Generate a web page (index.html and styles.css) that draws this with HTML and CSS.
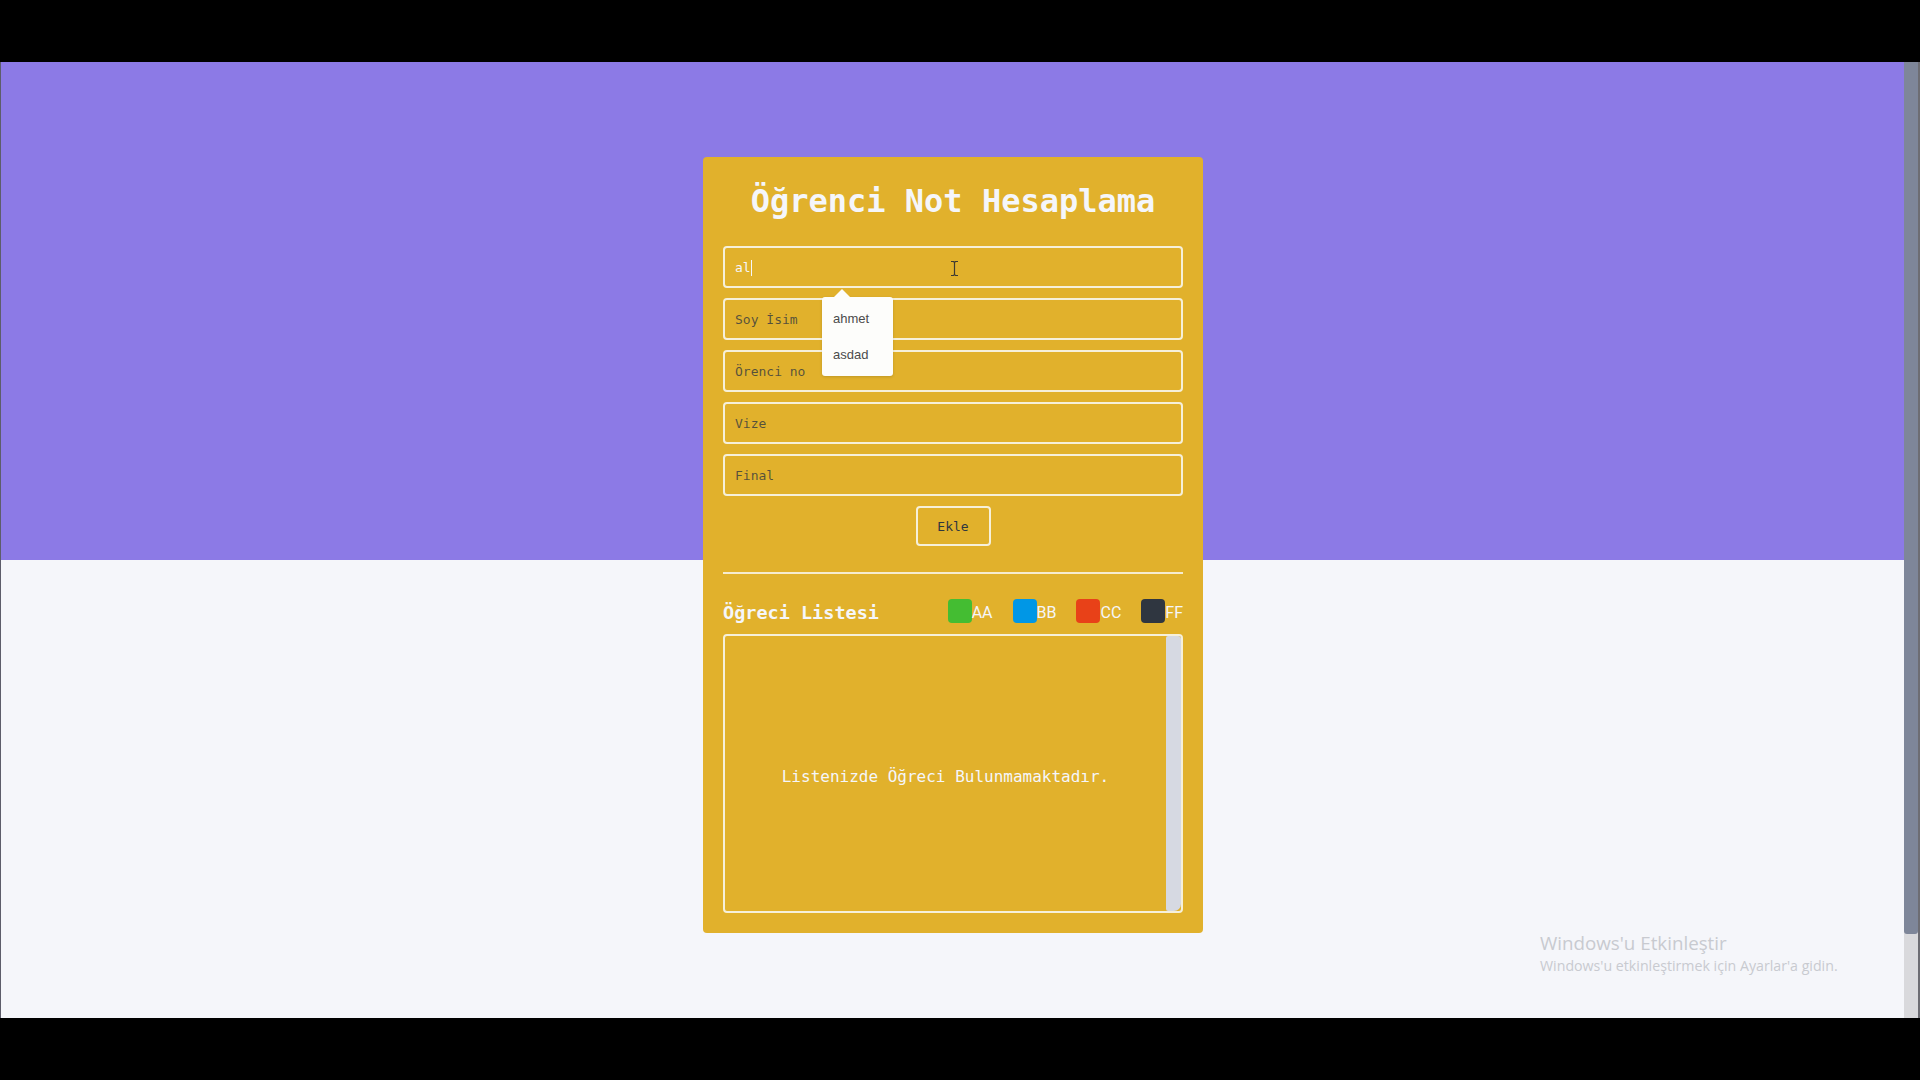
FILE: index.html
```html
<!DOCTYPE html>
<html lang="tr">
<head>
<meta charset="utf-8">
<title>Öğrenci Not Hesaplama</title>
<link rel="stylesheet" href="styles.css">
</head>
<body>
<div class="frame">
  <div class="viewport">
    <div class="card">
      <h1 class="title">Öğrenci Not Hesaplama</h1>
      <div class="fields">
        <div class="field-wrap">
          <input class="field field-active" type="text" value="al">
          <span class="caret"></span>
          <svg class="ibeam" width="9" height="17" viewBox="0 0 9 17"><path d="M1 1.5h2.5L4.5 2.5L5.5 1.5H8M4.5 2.5V14.5M1 15.5h2.5L4.5 14.5L5.5 15.5H8" fill="none" stroke="#3d3a33" stroke-width="1.2"/></svg>
        </div>
        <input class="field" type="text" placeholder="Soy İsim">
        <input class="field" type="text" placeholder="Örenci no">
        <input class="field" type="text" placeholder="Vize">
        <input class="field" type="text" placeholder="Final">
      </div>
      <div class="actions"><button class="btn">Ekle</button></div>
      <div class="divider"></div>
      <div class="list-head">
        <h2 class="list-title">Öğreci Listesi</h2>
        <div class="legend">
          <div class="legend-item"><span class="sw sw-aa"></span><span class="lg">AA</span></div>
          <div class="legend-item"><span class="sw sw-bb"></span><span class="lg">BB</span></div>
          <div class="legend-item"><span class="sw sw-cc"></span><span class="lg">CC</span></div>
          <div class="legend-item"><span class="sw sw-ff"></span><span class="lg">FF</span></div>
        </div>
      </div>
      <div class="list-box">
        <div class="list-content"><p class="empty">Listenizde Öğreci Bulunmamaktadır.</p></div>
        <div class="list-bar"></div>
      </div>
      <div class="autocomplete">
        <span class="ac-arrow"></span>
        <div class="ac-item">ahmet</div>
        <div class="ac-item">asdad</div>
      </div>
    </div>
    <div class="watermark">
      <div class="wm-1">Windows'u Etkinleştir</div>
      <div class="wm-2">Windows'u etkinleştirmek için Ayarlar'a gidin.</div>
    </div>
  </div>
  <div class="page-bar"><div class="page-thumb"></div></div>
</div>
</body>
</html>
```
FILE: styles.css
```css
html, body {
  margin: 0;
  padding: 0;
  background: #000;
  width: 1920px;
  height: 1080px;
  overflow: hidden;
}
.frame {
  margin-top: 62px;
  height: 956px;
  display: flex;
}
.viewport {
  flex: 1;
  position: relative;
  background: linear-gradient(#8c7ae6 0, #8c7ae6 498px, #f5f6fa 498px, #f5f6fa 100%);
  border-left: 1px solid #5d5d6a;
  padding-top: 95px;
  box-sizing: border-box;
}
.card {
  position: relative;
  width: 500px;
  margin: 0 auto;
  left: 0.5px;
  box-sizing: border-box;
  padding: 20px;
  background: #e1b12c;
  border-radius: 4px;
  font-family: "DejaVu Sans Mono", monospace;
}
.title {
  margin: 0 0 21px;
  font-size: 32px;
  line-height: 48px;
  font-weight: bold;
  text-align: center;
  color: #f5f6fa;
}
.fields {
  display: flex;
  flex-direction: column;
  gap: 10px;
}
.field-wrap {
  position: relative;
}
.field {
  display: block;
  width: 100%;
  height: 42px;
  box-sizing: border-box;
  padding: 0 10px;
  border: 2px solid #f6f0da;
  border-radius: 4px;
  background: transparent;
  font-family: "DejaVu Sans Mono", monospace;
  font-size: 13px;
  color: #f5f6fa;
  outline: none;
}
.field::placeholder {
  color: rgba(47, 54, 64, 0.78);
}
.caret {
  position: absolute;
  left: 28px;
  top: 14px;
  width: 1px;
  height: 16px;
  background: #f5f6fa;
}
.ibeam {
  position: absolute;
  left: 227px;
  top: 14px;
}
.actions {
  display: flex;
  justify-content: center;
  margin-top: 10px;
}
.btn {
  width: 75px;
  height: 40px;
  box-sizing: border-box;
  border: 2px solid #f6f0da;
  border-radius: 4px;
  background: transparent;
  font-family: "DejaVu Sans Mono", monospace;
  font-size: 13px;
  color: #2f3640;
  padding: 0;
}
.divider {
  margin-top: 26px;
  height: 2px;
  background: #f6ecd0;
}
.list-head {
  margin-top: 25px;
  height: 24px;
  display: flex;
  align-items: center;
  justify-content: space-between;
}
.list-title {
  margin: 4px 0 0;
  font-size: 18.5px;
  font-weight: bold;
  color: #f5f6fa;
  line-height: 24px;
}
.legend {
  display: flex;
  gap: 20px;
}
.legend-item {
  display: flex;
  align-items: center;
}
.sw {
  width: 24px;
  height: 24px;
  border-radius: 4px;
}
.sw-aa { background: #44bd32; }
.sw-bb { background: #0097e6; }
.sw-cc { background: #e84118; }
.sw-ff { background: #2f3640; }
.lg {
  font-family: Roboto, "Liberation Sans", sans-serif;
  font-size: 16px;
  color: #f5f6fa;
  padding-top: 3px;
}
.list-box {
  margin-top: 11px;
  height: 279px;
  box-sizing: border-box;
  border: 2px solid #f6f0da;
  border-radius: 4px;
  display: flex;
}
.list-content {
  flex: 1;
  display: flex;
  align-items: center;
  justify-content: center;
  padding-top: 5px;
}
.empty {
  margin: 0;
  font-size: 16px;
  color: #f5f6fa;
}
.list-bar {
  width: 15px;
  background: #d6d9e2;
  border-radius: 2px 3px 7px 2px;
}
.autocomplete {
  position: absolute;
  left: 119px;
  top: 140px;
  width: 71px;
  height: 79px;
  box-sizing: border-box;
  padding: 13px 0 0 11px;
  background: #fdfdfb;
  border-radius: 3px;
  box-shadow: 0 1px 3px rgba(0, 0, 0, 0.15);
  font-family: "Liberation Sans", Arial, sans-serif;
  font-size: 13px;
  color: #4b4b4b;
}
.ac-arrow {
  position: absolute;
  left: 12px;
  top: -8px;
  width: 0;
  height: 0;
  border-left: 8px solid transparent;
  border-right: 8px solid transparent;
  border-bottom: 8px solid #fdfdfb;
}
.ac-item {
  height: 36px;
  line-height: 17px;
}
.watermark {
  position: absolute;
  left: 1539px;
  top: 869px;
  font-family: "Open Sans", "Liberation Sans", sans-serif;
  color: #c8cad0;
}
.wm-1 {
  font-size: 18.75px;
  line-height: 24px;
}
.wm-2 {
  margin-top: 2px;
  font-size: 14.2px;
  line-height: 18px;
}
.page-bar {
  width: 16px;
  background: #d9d9dc;
  border-right: 2px solid #6d6d73;
  box-sizing: border-box;
}
.page-thumb {
  height: 872px;
  background: #7e8699;
  border-radius: 0 0 3px 3px;
}
```
